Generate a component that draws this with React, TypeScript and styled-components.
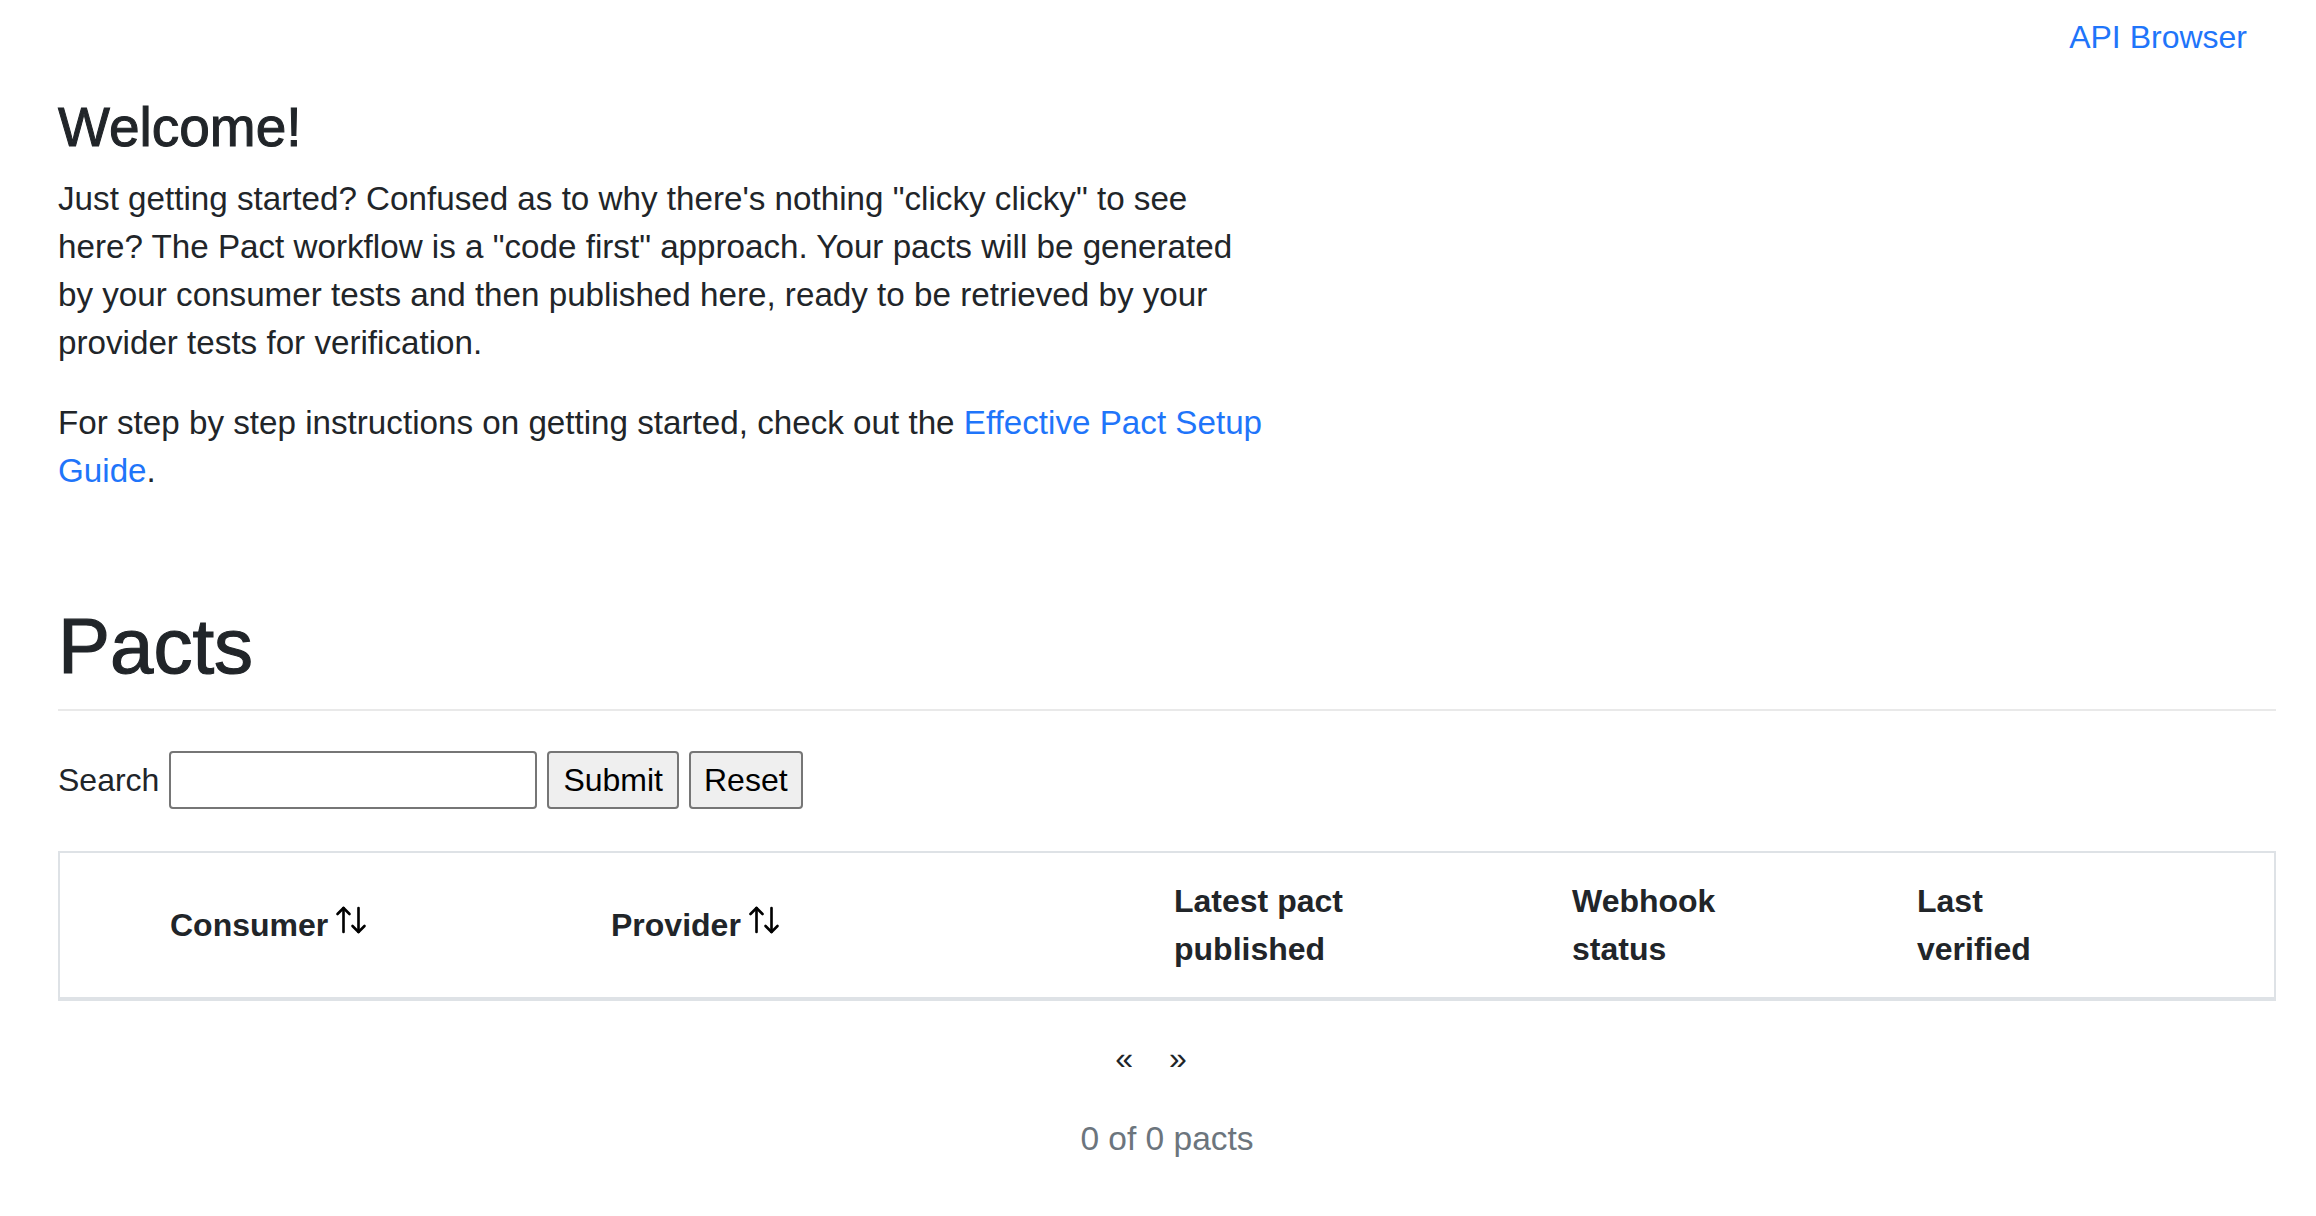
import React from "react";
import styled, { createGlobalStyle } from "styled-components";
import { ArrowUpDown } from "lucide-react";

const GlobalStyle = createGlobalStyle`
  body {
    margin: 0;
    background: #fff;
    color: #212529;
    font-family: "Liberation Sans", Helvetica, Arial, sans-serif;
    font-size: 32px;
    line-height: 48px;
  }
`;

const Page = styled.div`
  padding: 0 40px 64px 58px;
`;

const TopNav = styled.nav`
  display: flex;
  justify-content: flex-end;
  padding: 13px 29px 0 0;
`;

const NavLink = styled.a`
  color: #1f75fa;
  text-decoration: none;
  cursor: pointer;
`;

const WelcomeTitle = styled.h2`
  font-size: 55px;
  font-weight: 500;
  line-height: 66px;
  margin: 33px 0 15px;
  -webkit-text-stroke: 1px #212529;
`;

const Intro = styled.p`
  max-width: 1212px;
  margin: 0 0 32px;
  font-size: 33.2px;
`;

const InlineLink = styled.a`
  color: #1f75fa;
  text-decoration: none;
`;

const PactsTitle = styled.h1`
  font-size: 78px;
  font-weight: 500;
  line-height: 96px;
  margin: 103px 0 15px;
  -webkit-text-stroke: 1.2px #212529;
`;

const Divider = styled.hr`
  border: 0;
  border-top: 2px solid #e9e9e9;
  margin: 0 0 40px;
`;

const SearchForm = styled.form`
  display: flex;
  align-items: center;
  gap: 10px;
  margin-bottom: 42px;
`;

const SearchLabel = styled.label`
  font-size: 32px;
`;

const SearchInput = styled.input`
  box-sizing: border-box;
  width: 368px;
  height: 58px;
  border: 2px solid #767676;
  border-radius: 4px;
  font: inherit;
  padding: 0 8px;
`;

const FormButton = styled.button<{ $pad: number }>`
  box-sizing: border-box;
  height: 58px;
  padding: 0 ${(p) => p.$pad}px;
  background: #efefef;
  color: #000;
  border: 2px solid #767676;
  border-radius: 4px;
  font-family: "Liberation Sans", Helvetica, Arial, sans-serif;
  font-size: 32px;
`;

const TableFrame = styled.div`
  border: 2px solid #dee2e6;
`;

const PactTable = styled.table`
  width: 100%;
  border-collapse: collapse;
  table-layout: fixed;
`;

const HeadCell = styled.th<{ $w?: number }>`
  box-sizing: border-box;
  width: ${(p) => (p.$w ? `${p.$w}px` : "auto")};
  padding: 24px;
  text-align: left;
  vertical-align: middle;
  font-weight: bold;
  line-height: 48px;
  border-bottom: 2px solid #dee2e6;
`;

const SortIcon = styled(ArrowUpDown)`
  width: 36px;
  height: 36px;
  margin-left: 5px;
  vertical-align: -2px;
  color: #000;
`;

const Pager = styled.div`
  display: flex;
  justify-content: center;
  gap: 36px;
  padding-right: 32px;
  margin-top: 33px;
`;

const PageLink = styled.a`
  color: #212529;
  text-decoration: none;
  cursor: pointer;
`;

const Count = styled.p`
  margin: 33px 0 0;
  text-align: center;
  font-size: 33.5px;
  color: #6c757d;
`;

export default function App() {
  return (
    <>
      <GlobalStyle />
      <Page>
        <TopNav>
          <NavLink href="#">API Browser</NavLink>
        </TopNav>

        <WelcomeTitle>Welcome!</WelcomeTitle>
        <Intro>
          Just getting started? Confused as to why there's nothing "clicky clicky" to see
          here? The Pact workflow is a "code first" approach. Your pacts will be generated
          by your consumer tests and then published here, ready to be retrieved by your
          provider tests for verification.
        </Intro>
        <Intro>
          For step by step instructions on getting started, check out the{" "}
          <InlineLink href="#">Effective Pact Setup Guide</InlineLink>.
        </Intro>

        <PactsTitle>Pacts</PactsTitle>
        <Divider />

        <SearchForm onSubmit={(e) => e.preventDefault()}>
          <SearchLabel htmlFor="search">Search</SearchLabel>
          <SearchInput id="search" type="text" />
          <FormButton $pad={14} type="submit">Submit</FormButton>
          <FormButton $pad={13} type="reset">Reset</FormButton>
        </SearchForm>

        <TableFrame>
          <PactTable>
            <thead>
              <tr>
                <HeadCell $w={86} />
                <HeadCell $w={441}>
                  Consumer
                  <SortIcon strokeWidth={1.75} />
                </HeadCell>
                <HeadCell $w={563}>
                  Provider
                  <SortIcon strokeWidth={1.75} />
                </HeadCell>
                <HeadCell $w={398}>
                  Latest pact
                  <br />
                  published
                </HeadCell>
                <HeadCell $w={345}>
                  Webhook
                  <br />
                  status
                </HeadCell>
                <HeadCell>
                  Last
                  <br />
                  verified
                </HeadCell>
              </tr>
            </thead>
          </PactTable>
        </TableFrame>

        <Pager>
          <PageLink>«</PageLink>
          <PageLink>»</PageLink>
        </Pager>
        <Count>0 of 0 pacts</Count>
      </Page>
    </>
  );
}
